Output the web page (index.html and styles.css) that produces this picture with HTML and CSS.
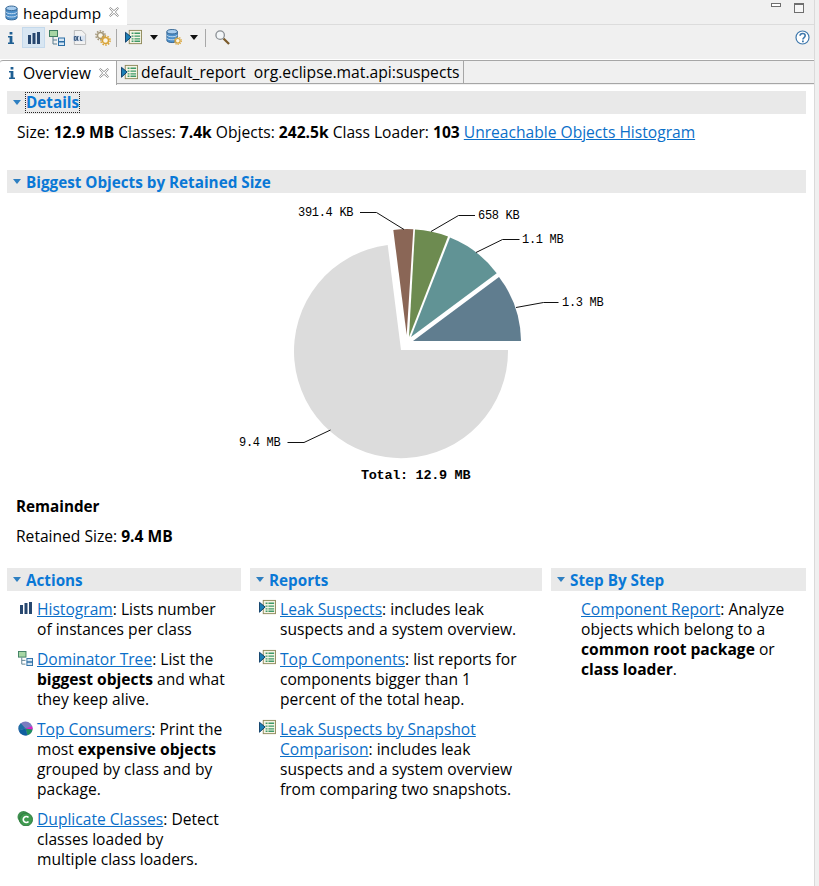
FILE: index.html
```html
<!DOCTYPE html>
<html lang="en">
<head>
<meta charset="utf-8">
<title>heapdump</title>
<link rel="stylesheet" href="styles.css">
</head>
<body>
<svg class="defs" width="0" height="0" aria-hidden="true">
  <defs>
    <symbol id="i-report" viewBox="0 0 18 18">
      <rect x="4.5" y="1.5" width="13" height="14" fill="#f6f4e4" stroke="#8f8a5c"/>
      <path d="M0.5 3.5 L6.5 8.5 L0.5 14 Z" fill="#1d7fb5" stroke="#0f3d66"/>
      <path d="M7 4.5h2M10 4.5h6M7 7.5h2M10 7.5h6M7 10.5h2M10 10.5h6M7 13h2M10 13h6" stroke="#3f9a68" stroke-width="1.4"/>
    </symbol>
    <symbol id="i-tree" viewBox="0 0 16 16">
      <rect x="0.5" y="0.5" width="8" height="6" fill="#a6d6a4" stroke="#3f7f63"/>
      <path d="M4 7v7h4M4 10h4" fill="none" stroke="#5a7f90"/>
      <rect x="9.5" y="8" width="6" height="3.5" fill="#d5e6f5" stroke="#2d6fa5"/>
      <rect x="9.5" y="12" width="6" height="3.5" fill="#d5e6f5" stroke="#2d6fa5"/>
    </symbol>
    <symbol id="i-bars" viewBox="0 0 12 12">
      <path d="M0 3h3v9H0zM4.500 1h3v11h-3zM9 0h3v12H9z" fill="#27476f"/>
    </symbol>
    <symbol id="i-info" viewBox="0 0 8 14">
      <path d="M2.600 1h2.800v2.600H2.600zM1 5h4.400v6.600H7V13H1v-1.400h1.600V6.400H1z" fill="#1f5f93"/>
    </symbol>
    <symbol id="i-gear" viewBox="0 0 12 12">
      <circle cx="6" cy="6" r="3.300" fill="#fbf6e6" stroke="currentColor" stroke-width="1.600"/>
      <circle cx="6" cy="6" r="5" fill="none" stroke="currentColor" stroke-width="1.600" stroke-dasharray="1.700 1.440"/>
    </symbol>
    <symbol id="i-close" viewBox="0 0 11 11">
      <path d="M1.500 0.500 L5.500 4 L9.500 0.500 L10.500 1.500 L7 5.500 L10.500 9.500 L9.500 10.500 L5.500 7 L1.500 10.500 L0.500 9.500 L4 5.500 L0.500 1.500 Z" fill="#fff" stroke="#8c8c8c"/>
    </symbol>
    <symbol id="i-caret" viewBox="0 0 8 5">
      <path d="M0 0h8L4 5z" fill="#2e7fc1"/>
    </symbol>
    <symbol id="i-db" viewBox="0 0 14 16">
      <path d="M1 3v10c0 3.200 12 3.200 12 0V3z" fill="#4d8fc9" stroke="#2c5f8f"/>
      <ellipse cx="7" cy="3" rx="6" ry="2.500" fill="#a9cdee" stroke="#2c5f8f"/>
      <path d="M1 6.500c0 3 12 3 12 0M1 10c0 3 12 3 12 0" fill="none" stroke="#cfe3f5"/>
    </symbol>
  </defs>
</svg>

<div class="window">
  <main class="main">
    <header class="editor-tabs">
      <div class="editor-tab">
        <svg width="13" height="16"><use href="#i-db"/></svg>
        <span>heapdump</span>
        <svg class="ico-close" width="10" height="10"><use href="#i-close"/></svg>
      </div>
      <div class="win-controls">
        <span class="win-min"></span>
        <span class="win-max"></span>
      </div>
    </header>

    <nav class="toolbar">
      <div class="tool"><svg width="8" height="14"><use href="#i-info"/></svg></div>
      <div class="tool tool-active"><svg width="12" height="12"><use href="#i-bars"/></svg></div>
      <div class="tool"><svg width="16" height="16"><use href="#i-tree"/></svg></div>
      <div class="tool">
        <svg width="15" height="15" viewBox="0 0 16 16">
          <path d="M2.500.5h8l4 4v11h-12z" fill="#f2f2f2" stroke="#b5b5b5"/>
          <rect x="1" y="6" width="13" height="6" fill="#d9e4f2"/>
          <path d="M2.500 7h2v4h-2zM7 7H5.800v4H7M9 7v4h2" fill="none" stroke="#27476f"/>
        </svg>
      </div>
      <div class="tool">
        <svg width="16" height="16" viewBox="0 0 16 16">
          <use class="gear-grey" href="#i-gear" x="0" y="0" width="11" height="11"/>
          <use class="gear-orange" href="#i-gear" x="5" y="5" width="11" height="11"/>
        </svg>
      </div>
      <span class="tool-sep"></span>
      <div class="tool"><svg width="17" height="17"><use href="#i-report"/></svg></div>
      <span class="tool-drop"></span>
      <div class="tool">
        <svg width="17" height="17" viewBox="0 0 18 18">
          <use href="#i-db" x="0" y="0" width="13" height="15"/>
          <use class="gear-orange" href="#i-gear" x="8" y="8" width="9" height="9"/>
        </svg>
      </div>
      <span class="tool-drop"></span>
      <span class="tool-sep"></span>
      <div class="tool">
        <svg width="15" height="15" viewBox="0 0 16 16">
          <path d="M9 9l6 6" stroke="#7a5a2a" stroke-width="2.400"/>
          <circle cx="5.500" cy="5.500" r="4.500" fill="#f3f6f8" stroke="#8a8f94" stroke-width="1.400"/>
        </svg>
      </div>
      <div class="tool-help">
        <svg width="15" height="15" viewBox="0 0 15 15">
          <circle cx="7.500" cy="7.500" r="6.500" fill="#fff" stroke="#3f79ad" stroke-width="1.200"/>
          <path d="M5 5.800c.2-3 5.200-3 5.200 0 0 1.800-2.300 1.700-2.300 3.600" fill="none" stroke="#3f79ad" stroke-width="1.600"/>
          <path d="M7 10.500h1.800v1.700H7z" fill="#3f79ad"/>
        </svg>
      </div>
    </nav>

    <div class="pane-tabs">
      <div class="pane-tab pane-tab-on">
        <svg width="8" height="14"><use href="#i-info"/></svg>
        <span>Overview</span>
        <svg class="ico-close" width="10" height="10"><use href="#i-close"/></svg>
      </div>
      <div class="pane-tab">
        <svg width="17" height="17"><use href="#i-report"/></svg>
        <span>default_report&nbsp; org.eclipse.mat.api:suspects</span>
      </div>
      <div class="pane-fill"></div>
    </div>

    <div class="content">
      <section class="section-details">
        <h2 class="bar"><svg width="8" height="5"><use href="#i-caret"/></svg><span class="focus">Details</span></h2>
        <p class="stats">Size: <b>12.9 MB</b> Classes: <b>7.4k</b> Objects: <b>242.5k</b> Class Loader: <b>103</b> <a href="#">Unreachable Objects Histogram</a></p>
      </section>

      <section class="section-chart">
        <h2 class="bar"><svg width="8" height="5"><use href="#i-caret"/></svg><span>Biggest Objects by Retained Size</span></h2>
        <svg class="pie" width="799" height="292" viewBox="7 193 799 292">
          <path d="M401 350 L387.700 245 A107 107 0 1 0 508 350 Z" fill="#dcdcdc"/>
          <path d="M413 341 H521 A107.500 107.500 0 0 0 499 277 Z" fill="#607d8f"/>
          <path d="M411 337 L496.700 273.300 A107 107 0 0 0 450 237.500 Z" fill="#619395"/>
          <path d="M409 337 L448 236.500 A107.500 107.500 0 0 0 415 229.500 Z" fill="#6d8b50"/>
          <path d="M406.700 335 L413.300 229.300 A106 106 0 0 0 393.300 230 Z" fill="#8a6656"/>
          <g class="leaders">
            <path d="M360 212.500H376.500L404 229.500"/>
            <path d="M431 231.500L458.500 215.500H475"/>
            <path d="M476 252.500L502.500 239.500H519.500"/>
            <path d="M516 307.500L543.500 302.500H558.500"/>
            <path d="M330.500 430L304 442.500H287.500"/>
          </g>
          <g class="pie-labels">
            <text x="298" y="216">391.4 KB</text>
            <text x="478" y="219">658 KB</text>
            <text x="522" y="243">1.1 MB</text>
            <text x="562" y="306">1.3 MB</text>
            <text x="239" y="446">9.4 MB</text>
            <text class="pie-total" x="361" y="479">Total: 12.9 MB</text>
          </g>
        </svg>
        <div class="remainder">
          <h3>Remainder</h3>
          <p>Retained Size: <b>9.4 MB</b></p>
        </div>
      </section>

      <div class="columns">
        <section class="col col-actions">
          <h2 class="bar"><svg width="8" height="5"><use href="#i-caret"/></svg><span>Actions</span></h2>
          <div class="item">
            <svg class="item-ico ico-bars" width="12" height="12"><use href="#i-bars"/></svg>
            <p><a href="#">Histogram</a>: Lists number<br>of instances per class</p>
          </div>
          <div class="item">
            <svg class="item-ico" width="15" height="15"><use href="#i-tree"/></svg>
            <p><a href="#">Dominator Tree</a>: List the<br><b>biggest objects</b> and what<br>they keep alive.</p>
          </div>
          <div class="item">
            <svg class="item-ico" width="15" height="15" viewBox="0 0 16 16">
              <circle cx="8" cy="8" r="7.500" fill="#7a7cc0"/>
              <path d="M8 8L15.500 8A7.500 7.500 0 0 1 10 15.200Z" fill="#1f8f5f"/>
              <path d="M8 8L15 5.500A7.500 7.500 0 0 1 15.500 9Z" fill="#e020c8"/>
              <path d="M8 8L10 15.200A7.500 7.500 0 0 1 .8 10Z" fill="#0f5f9f"/>
              <path d="M8 8L.8 10A7.500 7.500 0 0 1 3 2.500Z" fill="#1f6fa5"/>
            </svg>
            <p><a href="#">Top Consumers</a>: Print the<br>most <b>expensive objects</b><br>grouped by class and by<br>package.</p>
          </div>
          <div class="item">
            <svg class="item-ico ico-dup" width="16" height="16" viewBox="0 0 16 16">
              <circle cx="6.500" cy="7" r="6" fill="#3f8f4f"/>
              <circle cx="9" cy="9.500" r="6.500" fill="#3f9a4f" stroke="#2f7a3f"/>
              <path d="M11.500 7.500a3 3 0 1 0 0 4" fill="none" stroke="#fff" stroke-width="1.600"/>
            </svg>
            <p><a href="#">Duplicate Classes</a>: Detect<br>classes loaded by<br>multiple class loaders.</p>
          </div>
        </section>

        <section class="col col-reports">
          <h2 class="bar"><svg width="8" height="5"><use href="#i-caret"/></svg><span>Reports</span></h2>
          <div class="item">
            <svg class="item-ico" width="17" height="17"><use href="#i-report"/></svg>
            <p><a href="#">Leak Suspects</a>: includes leak<br>suspects and a system overview.</p>
          </div>
          <div class="item">
            <svg class="item-ico" width="17" height="17"><use href="#i-report"/></svg>
            <p><a href="#">Top Components</a>: list reports for<br>components bigger than 1<br>percent of the total heap.</p>
          </div>
          <div class="item">
            <svg class="item-ico" width="17" height="17"><use href="#i-report"/></svg>
            <p><a href="#">Leak Suspects by Snapshot <br>Comparison</a>: includes leak<br>suspects and a system overview<br>from comparing two snapshots.</p>
          </div>
        </section>

        <section class="col col-steps">
          <h2 class="bar"><svg width="8" height="5"><use href="#i-caret"/></svg><span>Step By Step</span></h2>
          <div class="item">
            <p><a href="#">Component Report</a>: Analyze<br>objects which belong to a<br><b>common root package</b> or<br><b>class loader</b>.</p>
          </div>
        </section>
      </div>
    </div>
  </main>
  <div class="edge"></div>
</div>
</body>
</html>
```
FILE: styles.css
```css
* { box-sizing: border-box; }
html, body { margin: 0; padding: 0; }
body {
  width: 819px;
  height: 886px;
  overflow: hidden;
  background: #fff;
  color: #000;
  font-family: "Open Sans", "Noto Sans", sans-serif;
  font-size: 15.6px;
  line-height: 20px;
}
.defs { position: absolute; }
svg { display: block; flex: none; }
p, h2, h3 { margin: 0; }

.window { display: flex; height: 886px; }
.main { width: 814px; display: flex; flex-direction: column; }
.edge { width: 5px; background: #f0f0f0; border-left: 1px solid #dadada; }

.editor-tabs {
  height: 25px;
  display: flex;
  justify-content: space-between;
  background: #f0f0f0;
  border-bottom: 1px solid #dcdcdc;
}
.editor-tab {
  width: 127px;
  height: 25px;
  background: #fff;
  display: flex;
  align-items: center;
  padding-left: 5px;
  gap: 5px;
  font-size: 15.3px;
}
.editor-tab .ico-close { margin: -2px 0 0 3px; }
.win-controls { display: flex; padding: 3px 10px 0 0; gap: 13px; }
.win-min { width: 10px; height: 4px; margin-top: 0; border: 1px solid #6e6e6e; background: #fff; }
.win-max { width: 10px; height: 10px; border: 1px solid #6e6e6e; border-top-width: 2px; background: #f6f6f6; }

.toolbar {
  height: 34px;
  display: flex;
  align-items: center;
  background: #f0f0f0;
  padding: 0 4px 9px 6px;
}
.tool {
  width: 23px;
  height: 21px;
  display: flex;
  align-items: center;
  justify-content: center;
}
.tool:first-child { width: 10px; margin-right: 6px; }
.tool-active { background: #d8e6f2; border: 1px solid #c4d9ec; }
.gear-grey { color: #a39679; }
.gear-orange { color: #d9a336; }
.tool-sep { width: 1px; height: 18px; margin: 0 5px 0 2px; background: #a8a8a8; }
.tool-drop {
  width: 0;
  height: 0;
  margin: 0 5px 0 4.5px;
  border-style: solid;
  border-width: 5px 4.5px 0;
  border-color: #111 transparent transparent;
}
.tool-help { margin-left: auto; }

.pane-tabs {
  height: 25px;
  margin-top: 1px;
  display: flex;
  background: #f0f0f0;
}
.pane-tab {
  height: 24px;
  display: flex;
  align-items: center;
  gap: 3px;
  padding-left: 4px;
  font-size: 15.7px;
  border-top: 1px solid #a6a6a6;
  border-right: 1px solid #a6a6a6;
  border-bottom: 1px solid #a6a6a6;
  background: #f0f0f0;
  padding-right: 3px;
}
.pane-tab-on {
  width: 117px;
  background: #fff;
  border-bottom: 0;
  height: 25px;
  padding-left: 8px;
  gap: 7px;
  border-top-left-radius: 3px;
}
.pane-tab-on .ico-close { margin-left: 1px; }
.pane-fill { flex: 1; height: 24px; border-top: 1px solid #a6a6a6; border-bottom: 1px solid #a6a6a6; }

.content { padding: 6px 8px 0 7px; }
.bar {
  height: 23px;
  display: flex;
  align-items: center;
  gap: 5px;
  padding-left: 6px;
  background: #e9e9e9;
  color: #0a78d6;
  font-size: 15.25px;
  font-weight: 700;
}
.focus { outline: 1px dotted #222; outline-offset: 0; height: 19px; line-height: 19px; }
a { color: #0b6fc9; text-decoration: underline; }
b { font-weight: 700; }

.stats { padding: 8px 0 0 10px; height: 56px; }
.pie { width: 799px; height: 292px; overflow: visible; }
.leaders path { fill: none; stroke: #111; stroke-width: 1; }
.pie-labels text { font-family: "Liberation Mono", monospace; font-size: 12px; letter-spacing: -0.3px; fill: #000; }
.pie-labels .pie-total { font-size: 13.5px; font-weight: 700; }

.remainder { padding: 11px 0 0 9px; height: 75px; }
.remainder h3 { font-size: 15.25px; font-weight: 700; height: 30px; }

.columns {
  display: grid;
  grid-template-columns: 234px 292px 255px;
  column-gap: 9px;
  margin-top: 8px;
}
.col .bar { margin-bottom: 8px; }
.item { display: flex; margin-bottom: 10px; }
.col-actions .item { padding-left: 30px; position: relative; }
.col-reports .item { padding-left: 30px; position: relative; }
.col-steps .item { padding-left: 30px; }
.col-actions .item-ico { position: absolute; left: 11px; top: 2px; }
.col-actions .ico-bars { left: 13px; top: 3px; }
.col-actions .ico-dup { left: 10px; top: 1px; }
.col-reports .item-ico { position: absolute; left: 9px; top: 0; }
```
